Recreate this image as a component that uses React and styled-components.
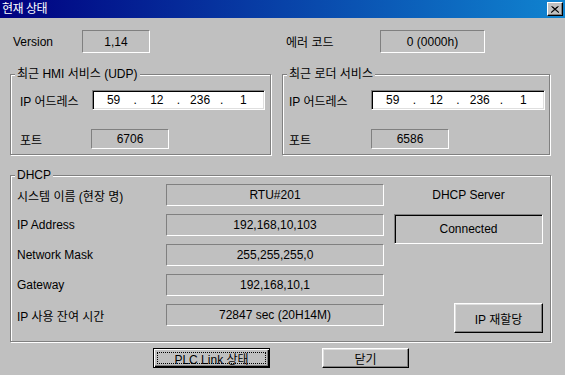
import React from "react";
import styled, { createGlobalStyle } from "styled-components";

const GlobalStyle = createGlobalStyle`
  html, body {
    margin: 0;
    padding: 0;
    background: #ffffff;
  }
  body {
    font-family: "Liberation Sans", "Noto Sans CJK KR", sans-serif;
    font-size: 12px;
    color: #000;
  }
`;

const Dialog = styled.div`
  width: 565px;
  height: 375px;
  background: #c0c0c0;
  display: flex;
  flex-direction: column;
  box-sizing: border-box;
`;

const TitleBar = styled.div`
  height: 18px;
  display: flex;
  align-items: center;
  justify-content: space-between;
  padding-left: 2px;
  background: linear-gradient(to right, #000080, #1084d0);
`;

const TitleText = styled.span`
  color: #fff;
  font-size: 12px;
  line-height: 18px;
  letter-spacing: -0.5px;
`;

const CloseButton = styled.div`
  width: 16px;
  height: 14px;
  margin-right: 2px;
  box-sizing: border-box;
  background: #c0c0c0;
  border: 1px solid;
  border-color: #fff #000 #000 #fff;
  box-shadow: inset -1px -1px 0 #808080;
  display: flex;
  align-items: center;
  justify-content: center;
`;

const TopRow = styled.div`
  display: flex;
  align-items: center;
  margin-top: 12px;
  padding-left: 13px;
`;

const Label = styled.div`
  width: ${(p) => p.$w}px;
  margin-left: ${(p) => p.$ml || 0}px;
  flex-shrink: 0;
  white-space: nowrap;
`;

const StaticBox = styled.div`
  width: ${(p) => p.$w}px;
  height: ${(p) => p.$h}px;
  box-sizing: border-box;
  flex-shrink: 0;
  border-top: 1px solid #808080;
  border-left: 1px solid #808080;
  border-bottom: 1px solid #fff;
  border-right: 1px solid #fff;
  display: flex;
  align-items: center;
  justify-content: center;
  white-space: nowrap;
`;

const GroupRow = styled.div`
  display: flex;
  gap: 11px;
  margin-top: 21px;
  padding-left: 10px;
`;

const Group = styled.div`
  position: relative;
  width: ${(p) => p.$w}px;
  height: ${(p) => p.$h}px;
  box-sizing: border-box;
  border: 1px solid #808080;
  box-shadow: 1px 1px 0 #fff, inset 1px 1px 0 #fff;
  padding: ${(p) => p.$pad};
`;

const Legend = styled.span`
  position: absolute;
  top: -8px;
  left: 4px;
  padding: 0 2px;
  line-height: 15px;
  background: #c0c0c0;
  white-space: nowrap;
`;

const FieldRow = styled.div`
  display: flex;
  align-items: center;
  margin-top: ${(p) => p.$mt || 0}px;
`;

const IpField = styled.div`
  width: ${(p) => p.$w}px;
  height: 20px;
  box-sizing: border-box;
  background: #fff;
  border-top: 1px solid #808080;
  border-left: 1px solid #808080;
  border-bottom: 1px solid #fff;
  border-right: 1px solid #fff;
  box-shadow: inset 1px 1px 0 #000, inset -1px -1px 0 #dfdfdf;
  padding: 0 1px;
  display: grid;
  grid-template-columns: 1fr 4px 1fr 4px 1fr 4px 1fr;
  align-items: center;
`;

const Octet = styled.span`
  text-align: center;
`;

const Dot = styled.span`
  text-align: center;
`;

const DhcpBody = styled.div`
  display: flex;
  align-items: flex-start;
`;

const DhcpRows = styled.div`
  display: flex;
  flex-direction: column;
  gap: 8px;
`;

const DhcpSide = styled.div`
  width: 149px;
  height: 149px;
  margin-left: 10px;
  display: flex;
  flex-direction: column;
  align-items: center;
`;

const SideLabel = styled.div`
  height: 22px;
  line-height: 22px;
  margin-bottom: 8px;
`;

const StatusBox = styled.div`
  width: 149px;
  height: 30px;
  box-sizing: border-box;
  border-top: 1px solid #808080;
  border-left: 1px solid #808080;
  border-bottom: 1px solid #fff;
  border-right: 1px solid #fff;
  box-shadow: inset 1px 1px 0 #000;
  display: flex;
  align-items: center;
  justify-content: center;
`;

const Button = styled.div`
  width: ${(p) => p.$w}px;
  height: ${(p) => p.$h}px;
  box-sizing: border-box;
  background: #c0c0c0;
  border: 1px solid;
  border-color: ${(p) => (p.$default ? "#000" : "#fff #000 #000 #fff")};
  box-shadow: ${(p) =>
    p.$default
      ? "inset 1px 1px 0 #fff, inset -1px -1px 0 #000, inset -2px -2px 0 #808080"
      : "inset -1px -1px 0 #808080, inset 1px 1px 0 #dfdfdf"};
  display: flex;
  align-items: center;
  justify-content: center;
  padding: 3px;
  white-space: nowrap;
`;

const FocusRect = styled.span`
  flex: 1;
  align-self: stretch;
  border: 1px dotted #000;
  display: flex;
  align-items: center;
  justify-content: center;
`;

const SideButton = styled(Button)`
  align-self: flex-end;
  margin-top: auto;
`;

const Footer = styled.div`
  display: flex;
  gap: 52px;
  margin-top: 6px;
  padding-left: 153px;
`;

function IpAddress({ w, parts }) {
  return (
    <IpField $w={w}>
      {parts.map((p, i) => (
        <React.Fragment key={i}>
          {i > 0 && <Dot>.</Dot>}
          <Octet>{p}</Octet>
        </React.Fragment>
      ))}
    </IpField>
  );
}

const dhcpRows = [
  ["시스템 이름 (현장 명)", "RTU#201"],
  ["IP Address", "192,168,10,103"],
  ["Network Mask", "255,255,255,0"],
  ["Gateway", "192,168,10,1"],
  ["IP 사용 잔여 시간", "72847 sec (20H14M)"],
];

const ip = ["59", "12", "236", "1"];

export default function App() {
  return (
    <>
      <GlobalStyle />
      <Dialog>
        <TitleBar>
          <TitleText>현재 상태</TitleText>
          <CloseButton>
            <svg width="8" height="7" viewBox="0 0 8 7">
              <path d="M0.5 0.5 L7.5 6.5 M1.5 0.5 L8 6.5 M7.5 0.5 L0.5 6.5 M6.5 0.5 L0 6.5" stroke="#000" strokeWidth="1" />
            </svg>
          </CloseButton>
        </TitleBar>

        <TopRow>
          <Label $w={69}>Version</Label>
          <StaticBox $w={68} $h={23}>1,14</StaticBox>
          <Label $w={94} $ml={136}>에러 코드</Label>
          <StaticBox $w={105} $h={23}>0 (0000h)</StaticBox>
        </TopRow>

        <GroupRow>
          <Group $w={261} $h={81} $pad="15px 0 0 9px">
            <Legend>최근 HMI 서비스 (UDP)</Legend>
            <FieldRow>
              <Label $w={72}>IP 어드레스</Label>
              <IpAddress w={173} parts={ip} />
            </FieldRow>
            <FieldRow $mt={19}>
              <Label $w={71}>포트</Label>
              <StaticBox $w={78} $h={20}>6706</StaticBox>
            </FieldRow>
          </Group>
          <Group $w={268} $h={81} $pad="15px 0 0 6px">
            <Legend>최근 로더 서비스</Legend>
            <FieldRow>
              <Label $w={82}>IP 어드레스</Label>
              <IpAddress w={174} parts={ip} />
            </FieldRow>
            <FieldRow $mt={19}>
              <Label $w={82}>포트</Label>
              <StaticBox $w={78} $h={20}>6586</StaticBox>
            </FieldRow>
          </Group>
        </GroupRow>

        <GroupRow>
          <Group $w={541} $h={167} $pad="8px 0 0 6px" style={{ marginTop: -1 }}>
            <Legend>DHCP</Legend>
            <DhcpBody>
              <DhcpRows>
                {dhcpRows.map(([label, value]) => (
                  <FieldRow key={label}>
                    <Label $w={149}>{label}</Label>
                    <StaticBox $w={218} $h={22}>{value}</StaticBox>
                  </FieldRow>
                ))}
              </DhcpRows>
              <DhcpSide>
                <SideLabel>DHCP Server</SideLabel>
                <StatusBox>Connected</StatusBox>
                <SideButton $w={89} $h={30}>IP 재할당</SideButton>
              </DhcpSide>
            </DhcpBody>
          </Group>
        </GroupRow>

        <Footer>
          <Button $w={117} $h={20} $default>
            <FocusRect>PLC Link 상태</FocusRect>
          </Button>
          <Button $w={87} $h={20}>닫기</Button>
        </Footer>
      </Dialog>
    </>
  );
}
